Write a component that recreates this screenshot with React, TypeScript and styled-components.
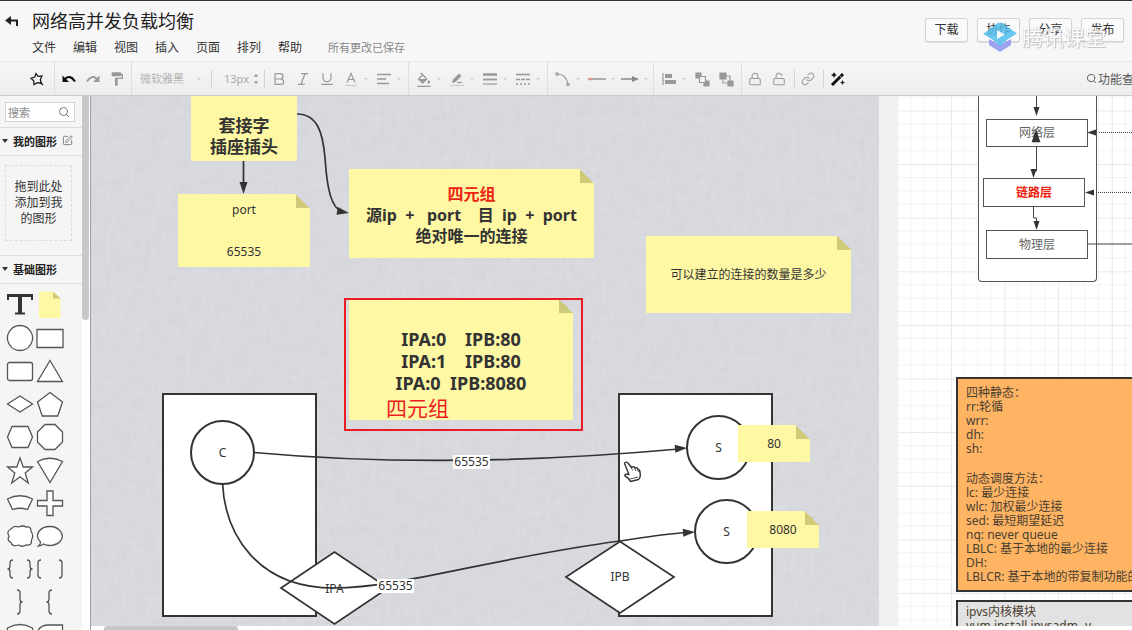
import React from "react";
import styled, { createGlobalStyle, css } from "styled-components";
import { Bold, Italic, Underline, Lock, LockOpen, Link, Search, SquarePen } from "lucide-react";
import { MdFormatPaint, MdFormatColorFill } from "react-icons/md";

const ink = "#333333";
const noteYellow = "#fef7a3";

const GlobalStyle = createGlobalStyle`
  *, *::before, *::after { box-sizing: border-box; }
  body {
    margin: 0;
    overflow: hidden;
    color: ${ink};
    font-family: "Noto Sans", "Noto Sans CJK SC", sans-serif;
    font-size: 12px;
  }
  button, input, select { font: inherit; color: inherit; }
`;

const Page = styled.div`
  display: flex;
  flex-direction: column;
  height: 100vh;
  background: #f7f7f7;
  border-top: 1px solid #33333d;
`;

/* ---------- header ---------- */

const Header = styled.header`
  position: relative;
  display: flex;
  flex: none;
  height: 61px;
  padding: 8px 8px 0 4px;
  border-bottom: 1px solid #e6e6e6;
`;

const BackButton = styled.button`
  width: 16px;
  height: 24px;
  padding: 0;
  border: 0;
  background: none;
  svg { display: block; }
`;

const Heading = styled.div`
  flex: 1;
  padding-left: 12px;
`;

const Title = styled.h1`
  margin: 0;
  font-size: 18px;
  line-height: 24px;
  font-weight: 400;
  color: #222222;
`;

const MenuBar = styled.nav`
  display: flex;
  align-items: center;
  gap: 17px;
  margin-top: 6px;
  line-height: 18px;
`;

const MenuButton = styled.button`
  padding: 0;
  border: 0;
  background: none;
`;

const SaveState = styled.span`
  margin-left: 9px;
  font-size: 11px;
  color: #888888;
`;

const Actions = styled.div`
  display: flex;
  gap: 9px;
  padding-top: 9px;
`;

const ActionButton = styled.button`
  width: 43px;
  height: 24px;
  padding: 0;
  border: 1px solid #d4d4d4;
  border-radius: 2px;
  background: #fafafa;
  box-shadow: 0 1px 1px #e2e2e2;
  line-height: 18px;
`;

const Watermark = styled.div`
  position: absolute;
  right: 26px;
  top: 20px;
  display: flex;
  align-items: center;
  gap: 4px;
  font-size: 21px;
  line-height: 32px;
  color: #ffffff;
  text-shadow: 0 0 1px #aaaaaa, 1px 1px 1px #bbbbbb;
  opacity: 0.9;
  pointer-events: none;
`;

/* ---------- toolbar ---------- */

const Toolbar = styled.div`
  display: flex;
  flex: none;
  height: 34px;
  overflow: hidden;
  border-bottom: 1px solid #c9cbcc;
  background: linear-gradient(#f6f6f6, #ededed);
  color: #999999;
`;

const Group = styled.div<{ $pad?: string }>`
  display: flex;
  flex: none;
  align-items: center;
  padding: ${(p) => p.$pad ?? "0 3px"};
  border-right: 1px solid #dedede;
  &:last-of-type { border-right: 0; }
`;

const Tool = styled.button<{ $drop?: boolean; $dark?: boolean }>`
  display: flex;
  flex: none;
  align-items: center;
  width: ${(p) => (p.$drop ? 33 : 24)}px;
  height: 24px;
  padding: 0 0 0 4px;
  border: 0;
  background: none;
  color: ${(p) => (p.$dark ? "#111111" : "#999999")};
  svg { flex: none; }
  ${(p) =>
    p.$drop &&
    css`
      &::after {
        content: "";
        margin-left: 5px;
        border: 2px solid transparent;
        border-top: 2px solid #cccccc;
        border-bottom: 0;
      }
    `}
`;

const Divider = styled.i`
  flex: none;
  width: 1px;
  height: 18px;
  margin: 0 2px;
  background: #d4d4d4;
`;

const FontSelect = styled.select`
  width: 53px;
  padding: 0;
  border: 0;
  background: none;
  appearance: none;
  font-size: 11px;
  color: #b3b3b3;
`;

const FontCaret = styled.i`
  margin: 0 8px 0 4px;
  border: 2px solid transparent;
  border-top-color: #cccccc;
  border-bottom: 0;
`;

const SizeInput = styled.input`
  width: 36px;
  padding: 0 0 0 10px;
  border: 0;
  background: none;
  font-size: 11px;
  color: #aaaaaa;
`;

const FindFeature = styled.button`
  display: flex;
  flex: none;
  align-items: center;
  gap: 1px;
  margin: 0 -14px 0 auto;
  padding: 0;
  border: 0;
  background: none;
  color: #555555;
`;

/* ---------- sidebar ---------- */

const Body = styled.div`
  display: flex;
  flex: 1;
  min-height: 0;
`;

const Sidebar = styled.aside`
  display: flex;
  flex: none;
  width: 91px;
  overflow: hidden;
  border-right: 1px solid #9c9ea3;
`;

const Library = styled.div`
  flex: 1;
  min-width: 0;
  background: #f5f5f5;
`;

const Track = styled.div`
  flex: none;
  width: 8px;
  padding-right: 1px;
  background: #ffffff;
`;

const Thumb = styled.div`
  height: 42%;
  border-radius: 0 0 4px 4px;
  background: #c8c8c8;
`;

const SearchBox = styled.label`
  display: flex;
  align-items: center;
  height: 20px;
  margin: 6px 7px 5px 5px;
  padding: 0 4px 0 2px;
  border: 1px solid #d2d2d2;
  background: #ffffff;
  color: #777777;
  input {
    flex: 1;
    min-width: 0;
    padding: 0;
    border: 0;
    outline: 0;
    background: none;
    font-size: 11px;
  }
  input::placeholder { color: #888888; }
`;

const SectionTitle = styled.h2`
  display: flex;
  align-items: center;
  gap: 5px;
  height: 29px;
  margin: 0;
  padding: 0 0 2px 2px;
  border: 1px solid #dcdcdc;
  border-width: 1px 0;
  font-size: 11px;
  color: #222222;
  &::before {
    content: "";
    border: 3px solid transparent;
    border-top: 4px solid #333333;
    border-bottom: 0;
  }
`;

const DropZone = styled.p`
  display: flex;
  align-items: center;
  height: 76px;
  margin: 9px 10px 14px 5px;
  padding: 0 8px;
  border: 1px dashed #dcdcdc;
  line-height: 16px;
  text-align: center;
`;

const Shapes = styled.div`
  display: grid;
  grid-template-columns: 30px 30px;
  grid-auto-rows: 33px;
  padding: 4px 0 0 5px;
`;

const ShapeButton = styled.button`
  display: grid;
  place-items: center;
  padding: 0;
  border: 0;
  background: none;
`;

/* ---------- canvas ---------- */

const Stage = styled.main`
  display: flex;
  flex: 1;
  flex-direction: column;
  min-width: 0;
`;

const Canvas = styled.div`
  position: relative;
  flex: 1;
  overflow: hidden;
  background: #f1f1f2;
`;

const Layer = styled.svg`
  position: absolute;
  left: 0;
  top: 0;
  width: 100%;
  height: 100%;
  pointer-events: none;
`;

const BottomTrack = styled.div`
  flex: none;
  height: 4px;
  padding-left: 13px;
  background: #ffffff;
  &::before {
    content: "";
    display: block;
    width: 13%;
    height: 4px;
    border-radius: 3px 3px 0 0;
    background: #c6c6c8;
  }
`;

type Spot = { $x: number; $y: number; $w: number; $h: number };

const Item = styled.div<Spot>`
  position: absolute;
  left: ${(p) => p.$x}px;
  top: ${(p) => p.$y}px;
  width: ${(p) => p.$w}px;
  height: ${(p) => p.$h}px;
  display: flex;
  flex-direction: column;
  align-items: center;
  justify-content: center;
  white-space: pre;
  text-align: center;
  line-height: 14px;
`;

const Box = styled(Item)<{ $round?: boolean }>`
  border: 2px solid ${ink};
  border-radius: ${(p) => (p.$round ? "50%" : "0")};
  background: #ffffff;
`;

const LayerBox = styled(Item)<{ $hot?: boolean }>`
  border: 1px solid #555555;
  background: #ffffff;
  color: ${(p) => (p.$hot ? "#ee2211" : "#666666")};
  font-weight: ${(p) => (p.$hot ? 700 : 400)};
`;

const Stack = styled(Item)`
  border: 1px solid #555555;
  border-top: 0;
  border-radius: 0 0 4px 4px;
  background: #ffffff;
`;

const Note = styled(Item)<{ $size?: number; $line?: number; $flat?: boolean; $top?: number }>`
  padding-top: ${(p) => p.$top ?? 0}px;
  background: ${noteYellow};
  ${(p) =>
    p.$size &&
    css`
      font-size: ${p.$size}px;
      line-height: ${p.$line ?? 21}px;
      font-weight: 700;
    `}
  ${(p) =>
    !p.$flat &&
    css`
      background: linear-gradient(45deg, #cfc97a 50%, transparent 50%) top right / 14px 14px no-repeat,
        linear-gradient(${noteYellow}, ${noteYellow}) left / calc(100% - 14px) 100% no-repeat,
        linear-gradient(${noteYellow}, ${noteYellow}) 0 14px no-repeat;
    `}
`;

const Red = styled.span`
  color: #ee2211;
`;

const EdgeLabel = styled(Item)`
  background: #ffffff;
`;

const Marker = styled(Item)`
  align-items: flex-start;
  justify-content: flex-end;
  padding: 0 0 8px 40px;
  border: 2px solid #ec1c24;
  color: #ec1c24;
  font-size: 21px;
  line-height: 26px;
`;

const TextPanel = styled(Item)<{ $fill: string; $top: number }>`
  align-items: flex-start;
  justify-content: flex-start;
  padding: ${(p) => p.$top}px 8px 0;
  border: 2px solid ${ink};
  background: ${(p) => p.$fill};
  color: #4a4030;
  text-align: left;
  overflow: hidden;
`;

const Paragraph = styled.p`
  margin: 0 0 16px;
`;

/* ---------- drawings ---------- */

const Glyph = ({ children, size = 16 }: { children: React.ReactNode; size?: number }) => (
  <svg width={size} height={size} viewBox="0 0 16 16" fill="none" stroke="currentColor" strokeWidth="1.2">
    {children}
  </svg>
);

const outlines: [string, string][] = [
  ["圆形", "M15 2.500a12.500 12.500 0 1 0 .01 0z"],
  ["矩形", "M2 6.500h26v18H2z"],
  ["圆角矩形", "M4.500 6.500h21a2 2 0 0 1 2 2v14a2 2 0 0 1-2 2h-21a2 2 0 0 1-2-2v-14a2 2 0 0 1 2-2z"],
  ["三角形", "M15 4.500l12.500 21h-25z"],
  ["菱形", "M15 7l12.500 8L15 23 2.500 15z"],
  ["五边形", "M15 3.500l12.500 9.500-4.800 14H7.300L2.500 13z"],
  ["六边形", "M7 4.500h16l4.500 10.500L23 25.500H7L2.500 15z"],
  ["八边形", "M10 2.500h10l7.500 7.500v10L20 27.500H10L2.500 20V10z"],
  ["星形", "M15 3l3.200 9H27.500l-7.300 6 3 10L15 21.700 6.800 28l3-10-7.300-6h9.300z"],
  ["扇形", "M15 27.500L2.500 6.500q12.500-6.500 25 0z"],
  ["弧形", "M2.500 11q12.500-6.500 25 0l-5 10.500q-7.500-2.500-15 0z"],
  ["十字", "M12 3h6v9.500h9.500v5.500H18v9.500h-6V18H2.500v-5.500H12z"],
  ["云", "M6 8Q9 4 13.500 6 18 4 21 6 26 5 26 10 29 15 26.500 19 27 25 21 24 17 26.500 13.500 24 7 26 6 21.500 1.500 19 4 15.500 1 10 6 8z"],
  ["气泡", "M5.500 21C-2 13 6 5.500 15 5.500S31 14 25 20.500C21 25 13 25.500 8.500 23Q6 25 3.500 25q2-1.500 2-4z"],
  ["大括号", "M8 6Q5 6 5 9v3q0 3-2.500 3 2.500 0 2.500 3v3q0 3 3 3M22 6q3 0 3 3v3q0 3 2.500 3-2.500 0-2.500 3v3q0 3-3 3"],
  ["方括号", "M6 6Q3 6 3 9v12q0 3 3 3M24 6q3 0 3 3v12q0 3-3 3"],
  ["右括号", "M12 3q3 0 3 3v6q0 3 2.500 3-2.500 0-2.500 3v6q0 3-3 3"],
  ["左括号", "M17 3q-3 0-3 3v6q0 3-2.500 3 2.500 0 2.500 3v6q0 3 3 3"],
  ["圆柱", "M2.500 8q12.500-7 25 0v16h-25z"],
  ["单角", "M27.500 5v20h-25V13q1-8 12-8z"],
];

const ShapeLibrary = () => (
  <Shapes>
    <ShapeButton aria-label="文本">
      <svg width="30" height="30" viewBox="0 0 30 30" fill="none" stroke={ink}>
        <path d="M2 5.500h26" strokeWidth="3" />
        <path d="M3 4v6M27 4v6" strokeWidth="2" />
        <path d="M15 5v18" strokeWidth="4" />
        <path d="M10 23.500h10" strokeWidth="2" />
      </svg>
    </ShapeButton>
    <ShapeButton aria-label="便签">
      <svg width="30" height="30" viewBox="0 0 30 30">
        <path d="M4 1.500h14l7.500 7V28H4z" fill={noteYellow} />
        <path d="M18 1.500v7h7.500z" fill="#cfc97a" />
      </svg>
    </ShapeButton>
    {outlines.map(([name, d]) => (
      <ShapeButton key={name} aria-label={name}>
        <svg width="30" height="30" viewBox="0 0 30 30">
          <path d={d} fill={name.includes("括号") ? "none" : "#fff"} stroke="#555" strokeWidth="1.3" />
        </svg>
      </ShapeButton>
    ))}
  </Shapes>
);

const Tip = ({ x, y, a = 0, s = 1 }: { x: number; y: number; a?: number; s?: number }) => (
  <path d="M0 0L-12 -4V4z" fill={ink} transform={`translate(${x} ${y}) rotate(${a}) scale(${s})`} />
);

const Backdrop = () => (
  <Layer>
    <defs>
      <filter id="weft" x="0" y="0" width="100%" height="100%">
        <feTurbulence type="fractalNoise" baseFrequency="0.05 0.2" numOctaves="2" seed="4" />
        <feColorMatrix values="0 0 0 0 1  0 0 0 0 1  0 0 0 0 1  .5 0 0 0 -.12" />
      </filter>
      <filter id="warp" x="0" y="0" width="100%" height="100%">
        <feTurbulence type="fractalNoise" baseFrequency="0.2 0.05" numOctaves="2" seed="9" />
        <feColorMatrix values="0 0 0 0 1  0 0 0 0 1  0 0 0 0 1  .5 0 0 0 -.12" />
      </filter>
      <pattern id="grid" x="806.300" y="14.500" width="53.600" height="53.600" patternUnits="userSpaceOnUse">
        <path d="M13.400 0v53.600M26.800 0v53.600M40.200 0v53.600M0 13.400h53.600M0 26.800h53.600M0 40.200h53.600" stroke="#f3f3f3" />
        <path d="M.5 0v53.600M0 .5h53.600" stroke="#e8e8e8" />
      </pattern>
    </defs>
    <rect width="788" height="100%" fill="#d5d6db" />
    <rect width="788" height="100%" filter="url(#weft)" opacity=".3" />
    <rect width="788" height="100%" filter="url(#warp)" opacity=".3" />
    <rect x="807" width="100%" height="100%" fill="#fff" />
    <rect x="807" width="100%" height="100%" fill="url(#grid)" />
  </Layer>
);

const Edges = () => (
  <Layer>
    <g fill="none" stroke={ink} strokeWidth="1.7">
      <path d="M152.500 65V88" />
      <path d="M206 18C227 18 232 38 234 62C236 92 240 113 252 116" />
      <path d="M163 356.500Q355 374 588 353" />
      <path d="M131.500 387C134 438 166 492 243 492C310 492 400 462 529 445C560 440 575 438 596 436.500" />
    </g>
    <Tip x={152.5} y={98} a={90} />
    <Tip x={258} y={117} a={10} />
    <Tip x={596} y={352} a={-4} />
    <Tip x={604} y={436} a={-4} />
    <g fill="none" stroke="#444" strokeWidth="1">
      <path d="M945.500 0v18M945.500 50v25h-3v5M942.500 110v12h3v10M996 148h46" />
      <path d="M1008 36.500h40M1005 96.500h40" strokeDasharray="1 1" />
    </g>
    <Tip x={945.5} y={20} a={90} s={0.75} />
    <Tip x={945} y={33} a={-90} s={1.1} />
    <Tip x={942.5} y={82} a={90} s={0.75} />
    <Tip x={945.5} y={134} a={90} s={0.75} />
    <Tip x={996} y={36.5} a={180} s={0.75} />
    <Tip x={994} y={96.5} a={180} s={0.75} />
  </Layer>
);

const Diamonds = () => (
  <Layer>
    <g fill="#fff" stroke={ink} strokeWidth="1.7">
      <path d="M190 492L243.500 456L297 492L243.500 528z" />
      <path d="M475 481L529 445.500L583 481L529 517z" />
    </g>
  </Layer>
);

const Pointer = () => (
  <Layer>
    <g transform="translate(532 364)" strokeLinejoin="round">
      <path d="M1.500 3.500Q2.500 1 5 3l3.500 4.500Q10.500 6 12 8q2.500-1 3 1.500 2 0 2 3Q18 17 15.500 19.500l-8 2Q6 18 2 16q-1-2.500 4-1.500z" fill="#fff" stroke="#333" strokeWidth="1.400" />
      <path d="M8.500 8l1 2.500M12 8.500l.8 2.500M15 10l.5 2M7 19l8-2" fill="none" stroke="#555" strokeWidth="1" />
    </g>
  </Layer>
);

const BrandMark = () => (
  <svg width="36" height="32" viewBox="0 0 36 32">
    <path d="M7 18l11 6 11-6v6L18 31 7 24z" fill="#8f9af0" />
    <path d="M18 1.500Q21 1.500 23 4l12 8.500Q25 18 18 25 11 18 1 13L13 4q2-2.500 5-2.500z" fill="#4dbdec" opacity=".9" />
    <path d="M15 9l7.500 4.500L15 18z" fill="#fff" />
  </svg>
);

const menus = ["文件", "编辑", "视图", "插入", "页面", "排列", "帮助"];
const actions = ["下载", "协作", "分享", "发布"];

export default function App() {
  return (
    <Page>
      <GlobalStyle />
      <Header>
        <BackButton aria-label="返回">
          <svg width="16" height="24" viewBox="0 0 16 24">
            <path d="M5 11.500h8V17" fill="none" stroke="#222" strokeWidth="2" />
            <path d="M1 11.500L7 7v9z" fill="#222" />
          </svg>
        </BackButton>
        <Heading>
          <Title>网络高并发负载均衡</Title>
          <MenuBar>
            {menus.map((m) => <MenuButton key={m}>{m}</MenuButton>)}
            <SaveState>所有更改已保存</SaveState>
          </MenuBar>
        </Heading>
        <Actions>
          {actions.map((a) => <ActionButton key={a}>{a}</ActionButton>)}
        </Actions>
        <Watermark><BrandMark />腾讯课堂</Watermark>
      </Header>

      <Toolbar>
        <Group $pad="0 5px 0 25px">
          <Tool $dark aria-label="美化">
            <Glyph><path d="M7 2.500l2 2.800 4-.3-1.700 3.500 1.200 4-4-.8-3.500 1.800-.3-3.800L2 7.200l3.700-1.200zM11 11l3 3" /></Glyph>
          </Tool>
        </Group>
        <Group $pad="0 2px">
          <Tool $dark aria-label="撤销">
            <Glyph><path d="M4 8q5-5 10 2.500" strokeWidth="2.200" /><path d="M1.500 4.500V11H8z" fill="currentColor" stroke="none" /></Glyph>
          </Tool>
          <Tool aria-label="恢复">
            <Glyph><path d="M12 8Q7 3 2 10.500" strokeWidth="2" /><path d="M14.500 4.500V11H8z" fill="currentColor" stroke="none" /></Glyph>
          </Tool>
          <Tool aria-label="格式刷"><MdFormatPaint size={16} /></Tool>
        </Group>
        <Group $pad="0 3px 0 8px">
          <FontSelect aria-label="字体"><option>微软雅黑</option></FontSelect>
          <FontCaret />
          <Divider />
          <SizeInput aria-label="字号" defaultValue="13px" />
          <Glyph size={12}><path d="M5 5l3-4 3 4zM5 11l3 4 3-4z" fill="currentColor" stroke="none" /></Glyph>
          <Divider />
          <Tool aria-label="粗体"><Bold size={16} strokeWidth={1.8} /></Tool>
          <Tool aria-label="斜体"><Italic size={16} strokeWidth={1.8} /></Tool>
          <Tool aria-label="下划线"><Underline size={16} strokeWidth={1.8} /></Tool>
          <Tool $drop aria-label="文字颜色">
            <Glyph><path d="M4 11.500L8 2.500l4 9M5.500 8.500h5" /><path d="M2 14.500h12" stroke="#ccc" /></Glyph>
          </Tool>
          <Tool $drop aria-label="对齐"><Glyph><path d="M1 3.500h14M1 8h9M1 12.500h12" strokeWidth="1.500" /></Glyph></Tool>
        </Group>
        <Group>
          <Tool $drop aria-label="填充">
            <svg width="16" height="16" viewBox="0 0 24 20"><MdFormatColorFill size={24} /></svg>
          </Tool>
          <Tool $drop aria-label="线条颜色">
            <Glyph><path d="M3 12l1-3.500L10 2.500 12.500 5 6.500 11z" fill="currentColor" stroke="none" /><path d="M8 11.500h5" /><path d="M1 14.500h14" stroke="#ccc" /></Glyph>
          </Tool>
          <Tool $drop aria-label="线条宽度"><Glyph><path d="M1 3.500h14" strokeWidth="2.500" /><path d="M1 8.500h14" strokeWidth="1.800" /><path d="M1 13h14" /></Glyph></Tool>
          <Tool $drop aria-label="线条样式"><Glyph><path d="M1 3.500h14" strokeWidth="1.600" /><path d="M1 8.500h14" strokeDasharray="4 1" strokeWidth="1.600" /><path d="M1 13h14" strokeDasharray="2 2" strokeWidth="1.600" /></Glyph></Tool>
        </Group>
        <Group>
          <Tool $drop aria-label="连线类型"><Glyph><path d="M2 3q9 0 11 10" /><path d="M1 2h2v2H1zM12 12.500h2v2h-2z" /></Glyph></Tool>
          <Tool $drop aria-label="起点"><svg width="18" height="16"><path d="M0 8h18" stroke="#999" strokeWidth="1.500" /><circle cx="2" cy="8" r="1.500" fill="#f09090" /></svg></Tool>
          <Tool $drop aria-label="终点"><svg width="18" height="16"><path d="M0 8h14" stroke="#888" strokeWidth="1.500" /><path d="M18 8l-7-3v6z" fill="#888" /></svg></Tool>
        </Group>
        <Group>
          <Tool $drop aria-label="对齐图形"><Glyph><path d="M2 2v12" /><path d="M4 3h7v4H4zM4 9h11v4H4z" fill="currentColor" stroke="none" /></Glyph></Tool>
          <Tool aria-label="置于顶层"><Glyph><path d="M2 2h5v5H2zM10 10h5v5h-5z" fill="currentColor" /><path d="M5.500 5.500h6v6h-6z" fill="#f3f3f3" /></Glyph></Tool>
          <Tool aria-label="置于底层"><Glyph><path d="M5 8v4h5M8 5h4v5" /><path d="M2 2h6v6H2zM10 10h5v5h-5z" fill="currentColor" /></Glyph></Tool>
        </Group>
        <Group $pad="0 0 0 2px">
          <Tool aria-label="锁定"><Lock size={14} strokeWidth={1.8} /></Tool>
          <Tool aria-label="解锁"><LockOpen size={14} strokeWidth={1.8} /></Tool>
          <Divider />
          <Tool aria-label="链接"><Link size={14} strokeWidth={1.8} /></Tool>
          <Divider />
          <Tool $dark aria-label="一键美化">
            <Glyph>
              <path d="M2 14L13 3" strokeWidth="3" />
              <path d="M9.500 4.500l2 2" stroke="#fff" strokeWidth=".8" />
              <path d="M4 1l1 2 2 1-2 1-1 2-1-2-2-1 2-1zM12.500 9l.8 1.700 1.700.8-1.700.8-.8 1.700-.8-1.700-1.700-.8 1.700-.8z" fill="currentColor" stroke="none" />
            </Glyph>
          </Tool>
        </Group>
        <FindFeature><Search size={11} />功能查找</FindFeature>
      </Toolbar>

      <Body>
        <Sidebar>
          <Library>
            <SearchBox>
              <input type="search" placeholder="搜索" aria-label="搜索" />
              <Search size={12} />
            </SearchBox>
            <SectionTitle>我的图形<SquarePen size={11} color="#777" /></SectionTitle>
            <DropZone>拖到此处添加到我的图形</DropZone>
            <SectionTitle>基础图形</SectionTitle>
            <ShapeLibrary />
          </Library>
          <Track><Thumb /></Track>
        </Sidebar>

        <Stage>
          <Canvas>
            <Backdrop />
            <Box $x={71} $y={297} $w={155} $h={224} />
            <Box $x={527} $y={297} $w={155} $h={224} />
            <Box $round $x={99} $y={324} $w={65} $h={65}>C</Box>
            <Box $round $x={595} $y={319} $w={65} $h={65}>S</Box>
            <Box $round $x={603} $y={403} $w={65} $h={65}>S</Box>
            <Diamonds />
            <Item $x={190} $y={486} $w={107} $h={14}>IPA</Item>
            <Item $x={475} $y={474} $w={108} $h={14}>IPB</Item>

            <Stack $x={887} $y={0} $w={119} $h={186} />
            <LayerBox $x={895} $y={23} $w={102} $h={28}>网络层</LayerBox>
            <LayerBox $hot $x={892} $y={82} $w={102} $h={29}>链路层</LayerBox>
            <LayerBox $x={895} $y={134} $w={102} $h={29}>物理层</LayerBox>
            <Edges />

            <EdgeLabel $x={362} $y={359} $w={37} $h={14}>65535</EdgeLabel>
            <EdgeLabel $x={286} $y={483} $w={37} $h={14}>65535</EdgeLabel>

            <Note $flat $size={17} $top={14} $x={100} $y={0} $w={106} $h={65}>{"套接字\n插座插头"}</Note>
            <Note $x={87} $y={98} $w={132} $h={73}>{"port\n\n\n65535"}</Note>
            <Note $size={16} $top={3} $x={258} $y={73} $w={245} $h={89}>
              <Red>四元组</Red>
              <span>{"源ip  +   port    目  ip  +  port"}</span>
              <span>绝对唯一的连接</span>
            </Note>
            <Note $x={555} $y={140} $w={205} $h={77}>可以建立的连接的数量是多少</Note>
            <Note $size={18} $line={22} $top={2} $x={258} $y={203} $w={224} $h={121}>{"IPA:0    IPB:80\nIPA:1    IPB:80\nIPA:0  IPB:8080"}</Note>
            <Note $x={647} $y={329} $w={72} $h={37}>80</Note>
            <Note $x={656} $y={415} $w={72} $h={37}>8080</Note>
            <Marker $x={253} $y={202} $w={239} $h={133}>四元组</Marker>

            <TextPanel $fill="#ffb464" $top={7} $x={865} $y={281} $w={240} $h={215}>
              <Paragraph>{"四种静态：\nrr:轮循\nwrr:\ndh:\nsh:"}</Paragraph>
              <Paragraph>{"动态调度方法：\nlc: 最少连接\nwlc: 加权最少连接\nsed: 最短期望延迟\nnq: never queue\nLBLC: 基于本地的最少连接\nDH:\nLBLCR: 基于本地的带复制功能的"}</Paragraph>
            </TextPanel>
            <TextPanel $fill="#e2e2e2" $top={3} $x={865} $y={504} $w={240} $h={80}>{"ipvs内核模块\nyum install ipvsadm -y"}</TextPanel>
            <Pointer />
          </Canvas>
          <BottomTrack />
        </Stage>
      </Body>
    </Page>
  );
}
